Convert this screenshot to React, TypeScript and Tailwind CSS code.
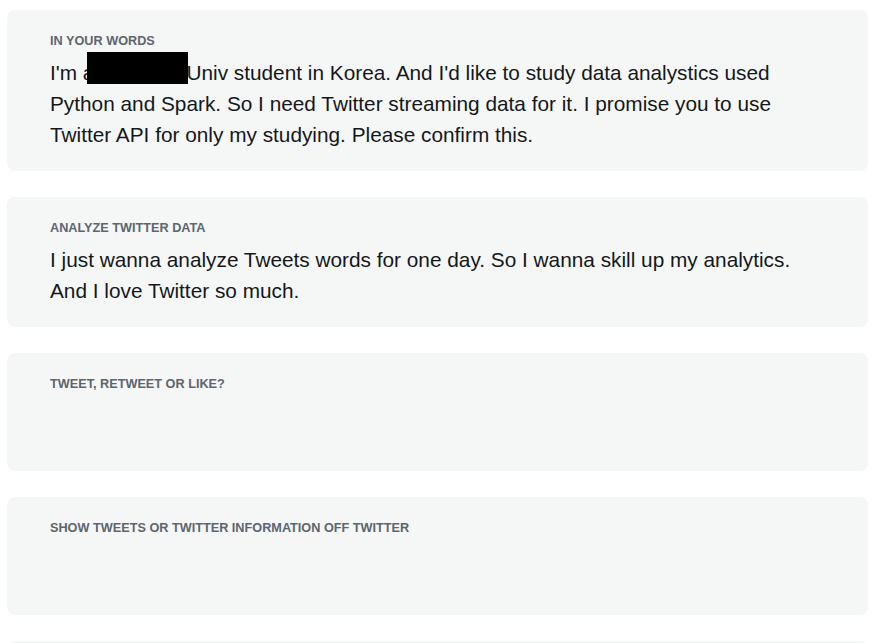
const cards: { label: string; body?: React.ReactNode; h: string }[] = [
  {
    label: "In your words",
    h: "",
    body: (
      <p className="relative">
        I'm a<span className="inline-block w-[92px]" />Univ student in Korea. And I'd like to study data analystics used Python and Spark. So I need Twitter streaming data for it. I promise you to use Twitter API for only my studying. Please confirm this.
        <span className="absolute left-[37px] top-[-5px] h-[32px] w-[101px] bg-black" />
      </p>
    ),
  },
  {
    label: "Analyze Twitter data",
    h: "",
    body: <p>I just wanna analyze Tweets words for one day. So I wanna skill up my analytics. And I love Twitter so much.</p>,
  },
  { label: "Tweet, Retweet or like?", h: "min-h-[50px]" },
  { label: "Show Tweets or Twitter information off Twitter", h: "min-h-[50px]" },
  { label: "", h: "min-h-[50px]" },
];

export default function App() {
  return (
    <div className="min-h-screen bg-white pt-[10px] pl-[7px] pr-[25px] font-['Liberation_Sans',Arial,sans-serif]">
      <div className="flex flex-col gap-[26px]">
        {cards.map((c, i) => (
          <section key={i} className="rounded-lg bg-[#f5f7f7] pl-[43px] pr-[60px] pt-[23px] pb-[21px]">
            <h3 className="text-[12.7px] font-bold uppercase leading-4 text-[#5b6670]">{c.label}</h3>
            <div className={`mt-2 text-[20.8px] leading-[31px] text-[#14171a] ${c.h}`}>{c.body}</div>
          </section>
        ))}
      </div>
    </div>
  );
}
